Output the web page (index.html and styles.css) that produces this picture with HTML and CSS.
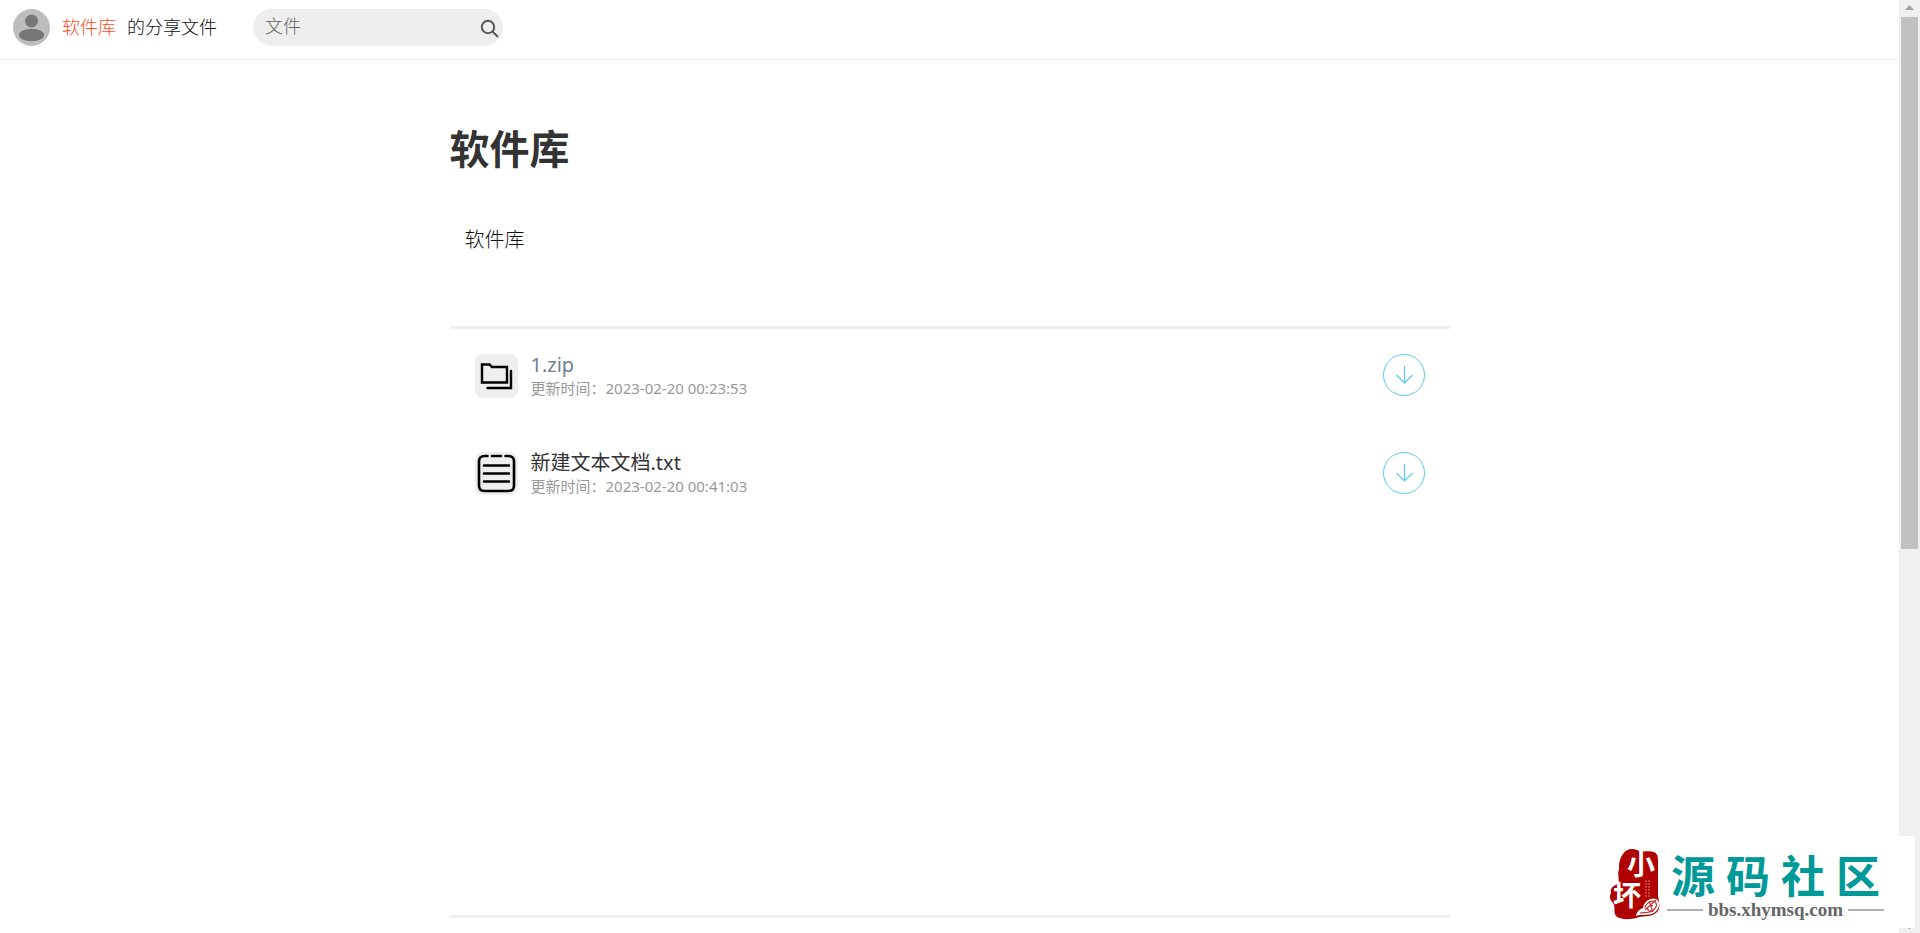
FILE: index.html
```html
<!DOCTYPE html>
<html lang="zh-CN">
<head>
<meta charset="utf-8">
<meta name="viewport" content="width=device-width, initial-scale=1">
<title>软件库</title>
<link rel="stylesheet" href="styles.css">
</head>
<body>
<header class="topbar">
  <svg class="avatar" viewBox="0 0 37 37" aria-hidden="true">
    <circle cx="18.5" cy="18.5" r="18.5" fill="#bdbdbd"/>
    <circle cx="18.5" cy="12" r="6.5" fill="#777"/>
    <ellipse cx="18.5" cy="26" rx="12.5" ry="6.2" fill="#777"/>
  </svg>
  <p class="owner"><a class="owner-name" href="#">软件库</a><span>的分享文件</span></p>
  <form class="search" role="search">
    <input class="search-input" type="text" placeholder="文件" aria-label="文件">
    <button class="search-button" type="button" aria-label="搜索">
      <svg width="20" height="20" viewBox="0 0 20 20" fill="none" stroke="#555" stroke-width="2">
        <circle cx="8" cy="8" r="6.2"/>
        <path d="M12.4 12.4L18 18"/>
      </svg>
    </button>
  </form>
</header>

<main class="content">
  <h1 class="title">软件库</h1>
  <p class="intro">软件库</p>
  <ul class="files">
    <li class="file">
      <svg class="file-icon" viewBox="0 0 43 44" fill="none" stroke="#000" stroke-width="2.400" aria-hidden="true">
        <rect width="43" height="44" rx="8" fill="#eee" stroke="none"/>
        <path d="M7 28.5V10.5H14.5L17 13H32V28.5Z"/>
        <path d="M36 17V34H12.500" stroke-linecap="round"/>
      </svg>
      <div class="file-text">
        <a class="file-name visited" href="#">1.zip</a>
        <span class="file-time">更新时间：2023-02-20 00:23:53</span>
      </div>
      <a class="download" href="#" aria-label="下载 1.zip">
        <svg width="18" height="20" viewBox="0 0 18 20" fill="none" stroke="#5ac8fa" stroke-width="1.200"><path d="M9.500 1V18M1.500 10L9.500 18L17.500 10"/></svg>
      </a>
    </li>
    <li class="file">
      <svg class="file-icon" viewBox="0 0 43 44" fill="none" stroke="#000" stroke-width="2.600" stroke-linecap="round" aria-hidden="true">
        <rect width="43" height="43" rx="8" fill="#eee" stroke="none"/>
        <path d="M12.500 4H9.500C6 4 4 6 4 9.500V33.500C4 37 6 39 9.500 39H33.500C37 39 39 37 39 33.500V9.500C39 6 37 4 33.500 4H30.500M17 4H26"/>
        <path d="M9 13.500H34M9 21.500H34M9 29.500H34"/>
      </svg>
      <div class="file-text">
        <a class="file-name" href="#">新建文本文档.txt</a>
        <span class="file-time">更新时间：2023-02-20 00:41:03</span>
      </div>
      <a class="download" href="#" aria-label="下载 新建文本文档.txt">
        <svg width="18" height="20" viewBox="0 0 18 20" fill="none" stroke="#5ac8fa" stroke-width="1.200"><path d="M9.500 1V18M1.500 10L9.500 18L17.500 10"/></svg>
      </a>
    </li>
  </ul>
</main>

<div class="scrollbar" aria-hidden="true">
  <svg class="arrow" viewBox="0 0 21 17"><path d="M6 10H15L10.500 5Z" fill="#a3a3a3"/></svg>
  <div class="thumb"></div>
  <svg class="arrow" viewBox="0 0 21 17"><path d="M6 8H15L10.500 13Z" fill="#505050"/></svg>
</div>

<aside class="badge">
  <svg class="seal" width="52" height="72" viewBox="0 0 52 72" aria-hidden="true">
    <path d="M14 6C17 1 23 0 28 2C33 5 39 2 45 4C50 6 49 12 49 20V48C50 54 52 60 48 64C44 69 35 68 30 69C23 72 11 72 7 68C4 64 7 60 4 55C1 52 0 49 2 45C1 41 3 38 9 36C11 31 8 27 10 21C10 14 11 10 14 6Z" fill="#b00000"/>
    <path d="M37 32V50M40 32V50" stroke="#dd8080" stroke-dasharray="2 1" fill="none"/>
    <path d="M34 60C35 53 42 49 47 51C52 54 51 61 45 65C39 68 31 66 27 68C28 63 31 61 34 60Z" fill="#fff"/>
    <path d="M36 60C37 54 45 51 47 55C49 60 42 65 39 62C37 59 42 56 44 58M40 53L44 64M47 52L36 62M31 65C38 64 43 66 47 59" fill="none" stroke="#c43333" stroke-width="1.200"/>
    <text class="seal-char" x="18" y="27">小</text>
    <text class="seal-char" x="4" y="58">坏</text>
  </svg>
  <div class="badge-text">
    <div class="badge-name"><span>源</span><span>码</span><span>社</span><span>区</span></div>
    <div class="badge-site">bbs.xhymsq.com</div>
  </div>
</aside>
</body>
</html>
```
FILE: styles.css
```css
* {
  box-sizing: border-box;
}

body {
  margin: 0;
  padding-right: 21px;
  background: #fff;
  color: #333;
  font-family: "Noto Sans", "Noto Sans CJK SC", sans-serif;
  font-weight: 400;
}

a {
  color: inherit;
  text-decoration: none;
}

.topbar {
  display: flex;
  align-items: flex-start;
  height: 60px;
  padding: 9px 13px;
  border-bottom: 1px solid #eee;
}

.avatar {
  width: 37px;
  height: 37px;
}

.owner {
  display: flex;
  gap: 11px;
  margin: 0 36px 0 12px;
  font-size: 18px;
  font-weight: 300;
  line-height: 36px;
  color: #111;
}

.owner-name {
  color: #ff4a1c;
}

.search {
  display: flex;
  align-items: center;
  width: 250px;
  height: 37px;
  padding: 0 3px 0 12px;
  border-radius: 19px;
  background: #eee;
}

.search-input {
  flex: 1;
  min-width: 0;
  height: 32px;
  padding: 0 0 4px;
  border: 0;
  outline: 0;
  background: none;
  color: #333;
  font: inherit;
  font-size: 18px;
  font-weight: 300;
}

.search-input::placeholder {
  color: #666;
}

.search-button {
  display: flex;
  padding: 2px 0 0;
  border: 0;
  background: none;
}

.content {
  max-width: 1000px;
  margin: 0 auto;
}

.title {
  margin: 0;
  padding: 60px 0 50px;
  font-size: 40px;
  font-weight: 700;
  line-height: 58px;
}

.intro {
  margin: 0;
  padding: 0 15px 74px;
  color: #111;
  font-size: 20px;
  font-weight: 300;
  line-height: 24px;
}

.files {
  display: flex;
  flex-direction: column;
  gap: 54px;
  min-height: 592px;
  margin: 0;
  padding: 25px;
  border: solid #eee;
  border-width: 3px 0;
  list-style: none;
}

.file {
  display: flex;
  align-items: flex-start;
  height: 44px;
}

.file-icon {
  width: 43px;
  height: 44px;
}

.file-text {
  display: flex;
  flex: 1;
  flex-direction: column;
  margin-left: 13px;
}

.file-name {
  font-size: 20px;
  line-height: 22px;
}

.file-name.visited {
  color: #708090;
}

.file-time {
  color: #999;
  font-size: 15px;
  line-height: 24px;
}

.download {
  display: flex;
  align-items: center;
  justify-content: center;
  width: 42px;
  height: 42px;
  border: 1px solid #5ac8fa;
  border-radius: 50%;
}

.scrollbar {
  position: fixed;
  top: 0;
  right: 0;
  bottom: 0;
  display: flex;
  flex-direction: column;
  width: 21px;
  background: #f0f0f0;
}

.arrow {
  height: 17px;
}

.thumb {
  height: 57%;
  margin: 0 2px auto;
  background: #c1c1c1;
}

.badge {
  position: fixed;
  right: 5px;
  bottom: 5px;
  display: flex;
  gap: 6px;
  padding: 12px 31px 8px 16px;
  background: #fff;
}

.seal {
  overflow: visible;
}

.seal-char {
  fill: #fff;
  font-family: "Noto Sans CJK SC", sans-serif;
  font-size: 28px;
  font-weight: 700;
}

.badge-name {
  display: flex;
  gap: 11px;
  padding: 0 4px;
  color: #009999;
  font-family: "Noto Sans CJK SC", sans-serif;
  font-size: 44px;
  font-weight: 700;
  line-height: 52px;
}

.badge-site {
  display: flex;
  align-items: center;
  gap: 5px;
  color: #666;
  font-family: "Liberation Serif", serif;
  font-size: 19px;
  font-weight: 700;
  line-height: 20px;
}

.badge-site::before,
.badge-site::after {
  flex: 1;
  height: 2px;
  background: #b0b0b8;
  content: "";
}
```
